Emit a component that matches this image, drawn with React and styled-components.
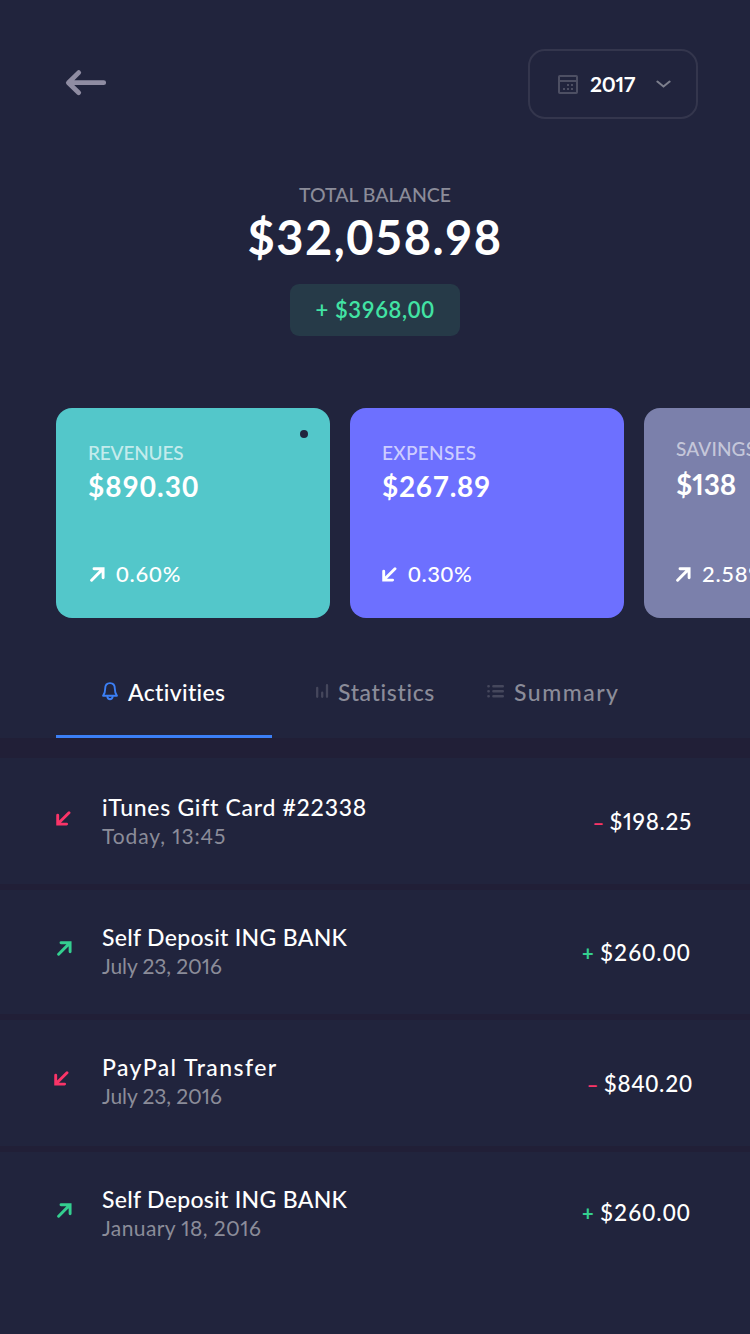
import React from "react";
import styled, { createGlobalStyle, css } from "styled-components";

const ink = "#21243d";
const muted = "#8b8c99";

const Global = createGlobalStyle`
  * { box-sizing: border-box; }
  body {
    margin: 0;
    background: ${ink};
    color: #fff;
    font-family: Lato, "Open Sans", sans-serif;
  }
`;

const spaced = css`
  letter-spacing: ${(p) => p.$ls || 0}px;
  font-variant-numeric: ${(p) => (p.$narrow ? "proportional-nums" : "normal")};
  white-space: nowrap;
`;

const Screen = styled.main`
  width: 750px;
  height: 1334px;
  display: flex;
  flex-direction: column;
  overflow: hidden;
  background: ${ink};
`;

const Header = styled.header`
  display: flex;
  justify-content: space-between;
  align-items: flex-start;
  padding: 49px 52px 0 65px;
`;

const BackButton = styled.button`
  margin: 20px 0 0;
  padding: 0;
  border: 0;
  background: none;
  color: #8f8ca2;
  line-height: 0;
`;

const YearSelect = styled.button`
  display: flex;
  align-items: center;
  width: 170px;
  height: 70px;
  padding: 0 25px 0 28px;
  border: 2px solid #34364d;
  border-radius: 17px;
  background: none;
  color: #fff;
  font-family: inherit;
`;

const Year = styled.span`
  flex: 1;
  margin-left: 12px;
  text-align: left;
  font-size: 21px;
  font-weight: 700;
  line-height: 26px;
  ${spaced}
`;

const Balance = styled.section`
  display: flex;
  flex-direction: column;
  align-items: center;
  padding-top: 64px;
`;

const BalanceLabel = styled.div`
  color: ${muted};
  font-size: 19.5px;
  font-weight: 500;
  line-height: 24px;
  ${spaced}
`;

const BalanceValue = styled.div`
  margin-top: 2px;
  font-size: 47px;
  font-weight: 700;
  line-height: 56px;
  ${spaced}
`;

const Gain = styled.div`
  display: flex;
  align-items: center;
  justify-content: center;
  width: 170px;
  height: 52px;
  margin-top: 19px;
  padding-bottom: 2px;
  border-radius: 9px;
  background: #263a48;
  color: #42e3a4;
  font-size: 22px;
  font-weight: 600;
  ${spaced}
`;

const Cards = styled.section`
  display: flex;
  gap: 20px;
  padding: 72px 0 0 56px;
`;

const Card = styled.article`
  position: relative;
  flex: 0 0 274px;
  display: flex;
  flex-direction: column;
  height: 210px;
  padding: ${(p) => p.$top}px 0 0 32px;
  border-radius: 16px;
  background: ${(p) => p.$bg};
`;

const CardLabel = styled.div`
  color: rgba(255, 255, 255, 0.68);
  opacity: ${(p) => p.$fade || 1};
  font-size: 19px;
  font-weight: 500;
  line-height: 24px;
  ${spaced}
`;

const CardValue = styled.div`
  margin-top: ${(p) => p.$gap}px;
  font-size: 28px;
  font-weight: 700;
  line-height: 34px;
  ${spaced}
`;

const CardChange = styled.div`
  display: flex;
  align-items: center;
  gap: 11px;
  margin-top: auto;
  margin-bottom: 30px;
  padding-left: ${(p) => p.$left}px;
  font-size: 22px;
  font-weight: 500;
  line-height: 28px;
  ${spaced}
`;

const CardDot = styled.span`
  position: absolute;
  top: 22px;
  right: 22px;
  width: 8px;
  height: 8px;
  border-radius: 50%;
  background: ${ink};
`;

const Tabs = styled.nav`
  display: flex;
  height: 120px;
  padding-left: 56px;
`;

const Tab = styled.button`
  display: flex;
  align-items: flex-start;
  width: ${(p) => p.$w}px;
  padding: 60px 0 0 ${(p) => p.$left}px;
  border: 0;
  border-bottom: 3px solid ${(p) => (p.$active ? "#3b7ff6" : "transparent")};
  background: none;
  color: ${(p) => (p.$active ? "#fff" : muted)};
  font-family: inherit;
  font-size: 23px;
  font-weight: 500;
  line-height: 28px;
  ${spaced}
`;

const TabIcon = styled.span`
  flex: none;
  display: flex;
  width: ${(p) => p.$w}px;
  padding-top: 4px;
  color: ${(p) => p.$color};
`;

const List = styled.section`
  display: flex;
  flex-direction: column;
  flex: 1;
  gap: 6px;
  padding-top: 20px;
  background: #211f37;
`;

const Row = styled.article`
  display: flex;
  align-items: flex-start;
  flex: ${(p) => (p.$h ? `0 0 ${p.$h}px` : "1")};
  padding-left: ${(p) => p.$left}px;
  padding-right: ${(p) => p.$right}px;
  background: ${ink};
`;

const Direction = styled.span`
  flex: none;
  width: ${(p) => p.$w}px;
  padding-top: ${(p) => p.$top}px;
  line-height: 0;
  color: ${(p) => (p.$up ? "#34cf90" : "#fa3468")};
`;

const Details = styled.div`
  flex: 1;
  padding-top: ${(p) => p.$top}px;
`;

const Title = styled.div`
  font-size: 23px;
  font-weight: 500;
  line-height: 28px;
  ${spaced}
`;

const When = styled.div`
  margin-top: 1px;
  color: ${muted};
  font-size: 21px;
  line-height: 28px;
  ${spaced}
`;

const Amount = styled.div`
  display: flex;
  align-items: baseline;
  padding-top: ${(p) => p.$top}px;
  font-size: 22.5px;
  font-weight: 500;
  line-height: 28px;
  ${spaced}
`;

const Sign = styled.span`
  width: ${(p) => (p.$up ? 18 : 17)}px;
  color: ${(p) => (p.$up ? "#34cf90" : "#fa3468")};
  font-size: 20px;
  font-weight: 700;
`;

const Trend = ({ up }) => (
  <svg width="15" height="15" viewBox="0 0 15 15" fill="none" stroke="currentColor" strokeWidth="2.9" strokeLinecap="round">
    {up ? <path d="M1.6 13.2L12.4 2.4M4 1.8h9.1v8.9" /> : <path d="M13 1.7L2.2 12.5M1.7 4.2v8.9h8.9" />}
  </svg>
);

const BackIcon = () => (
  <svg width="42" height="28" viewBox="0 0 42 28" fill="none" stroke="currentColor" strokeWidth="4.8" strokeLinecap="round" strokeLinejoin="round">
    <path d="M38.7 13.7H4M13.7 3.6L3.4 13.7l10.3 10" />
  </svg>
);

const CalendarIcon = () => (
  <svg width="20" height="19" viewBox="0 0 20 19" fill="none" stroke="#4d4f63" strokeWidth="2">
    <rect x="1" y="1" width="18" height="17" rx="0.8" />
    <path d="M1 6h18" />
    <path d="M9 10h2M13 10h2M5 14h2M9 14h2M13 14h2" />
  </svg>
);

const ChevronIcon = () => (
  <svg width="15" height="9" viewBox="0 0 15 9" fill="none" stroke="#7d7f8d" strokeWidth="2" strokeLinecap="round" strokeLinejoin="round">
    <path d="M1.4 1.6l6.1 5 6.1-5" />
  </svg>
);

const BellIcon = () => (
  <svg width="16" height="19" viewBox="0 0 16 19" fill="none" stroke="currentColor" strokeWidth="1.9" strokeLinecap="round" strokeLinejoin="round">
    <path d="M1.1 13.7c1.4-1.6 2.1-3.2 2.1-7.1C3.2 3.2 5.2 1.1 8 1.1s4.8 2.100 4.800 5.500c0 3.900.7 5.500 2.100 7.100z" />
    <path d="M5.300 14.800c.5 1.700 1.400 2.500 2.700 2.500s2.200-.8 2.700-2.500" />
  </svg>
);

const BarsIcon = () => (
  <svg width="14" height="17" viewBox="0 0 14 17" stroke="currentColor" strokeWidth="2.3" strokeLinecap="round">
    <path d="M2.200 6v8.800M7.200 10.700v4.100M12 3.200v11.600" />
  </svg>
);

const ListIcon = () => (
  <svg width="18" height="16" viewBox="0 0 18 16" stroke="currentColor" strokeWidth="2.5" strokeLinecap="round">
    <path d="M1.400 4.200h.3M6.400 4.200h9.400M1.400 9.200h.3M6.400 9.200h9.400M1.400 14.200h.3M6.400 14.200h9.400" />
  </svg>
);

const cards = [
  { label: "REVENUES", ls: -0.17, value: "$890.30", vls: 1.03, change: "0.60%", cls: 0.8, up: true, bg: "#53c7ca", top: 33, gap: 4, left: 2, dot: true },
  { label: "EXPENSES", ls: 0.3, value: "$267.89", vls: 0.69, change: "0.30%", cls: 0.63, up: false, bg: "#6d70ff", top: 33, gap: 4, left: 0 },
  { label: "SAVINGS", ls: 0.15, value: "$138", vls: -0.1, narrow: true, change: "2.58%", cls: 0.7, up: true, bg: "#7b80ab", top: 29, gap: 6, left: 0, fade: 0.85 },
];

const rows = [
  { title: "iTunes Gift Card #22338", ls: 0.7, when: "Today, 13:45", wls: 0.9, amount: "$198.25", als: 0.7, narrow: true, up: false, h: 126, left: 56, top: 35, icon: 53, at: 50, right: 58 },
  { title: "Self Deposit ING BANK", ls: 0.3, when: "July 23, 2016", wls: -0.1, amount: "$260.00", als: 1.07, up: true, h: 124, left: 57, top: 33, icon: 51, at: 49, right: 59 },
  { title: "PayPal Transfer", ls: 1.43, when: "July 23, 2016", wls: -0.1, amount: "$840.20", als: 0.82, up: false, h: 126, left: 54, top: 33, icon: 51, at: 50, right: 57 },
  { title: "Self Deposit ING BANK", ls: 0.3, when: "January 18, 2016", wls: 0.4, amount: "$260.00", als: 1.07, up: true, left: 57, top: 33, icon: 51, at: 47, right: 59 },
];

export default function App() {
  return (
    <Screen>
      <Global />
      <Header>
        <BackButton><BackIcon /></BackButton>
        <YearSelect>
          <CalendarIcon />
          <Year $narrow $ls={-0.2}>2017</Year>
          <ChevronIcon />
        </YearSelect>
      </Header>
      <Balance>
        <BalanceLabel>TOTAL BALANCE</BalanceLabel>
        <BalanceValue $ls={1.5}>$32,058.98</BalanceValue>
        <Gain $ls={0.65}>+ $3968,00</Gain>
      </Balance>
      <Cards>
        {cards.map((c) => (
          <Card key={c.label} $bg={c.bg} $top={c.top}>
            {c.dot && <CardDot />}
            <CardLabel $ls={c.ls} $fade={c.fade}>{c.label}</CardLabel>
            <CardValue $ls={c.vls} $narrow={c.narrow} $gap={c.gap}>{c.value}</CardValue>
            <CardChange $ls={c.cls} $left={c.left}><Trend up={c.up} />{c.change}</CardChange>
          </Card>
        ))}
      </Cards>
      <Tabs>
        <Tab $active $w={216} $left={46} $ls={0.35}><TabIcon $w={26} $color="#3b7ff6"><BellIcon /></TabIcon>Activities</Tab>
        <Tab $w={171} $left={43} $ls={0.65}><TabIcon $w={23} $color="#45475c"><BarsIcon /></TabIcon>Statistics</Tab>
        <Tab $w={200} $left={44} $ls={1.5}><TabIcon $w={27} $color="#45475c"><ListIcon /></TabIcon>Summary</Tab>
      </Tabs>
      <List>
        {rows.map((r, i) => (
          <Row key={i} $h={r.h} $left={r.left} $right={r.right}>
            <Direction $up={r.up} $w={102 - r.left} $top={r.icon}><Trend up={r.up} /></Direction>
            <Details $top={r.top}>
              <Title $ls={r.ls}>{r.title}</Title>
              <When $narrow $ls={r.wls}>{r.when}</When>
            </Details>
            <Amount $ls={r.als} $narrow={r.narrow} $top={r.at}><Sign $up={r.up}>{r.up ? "+" : "–"}</Sign>{r.amount}</Amount>
          </Row>
        ))}
      </List>
    </Screen>
  );
}
